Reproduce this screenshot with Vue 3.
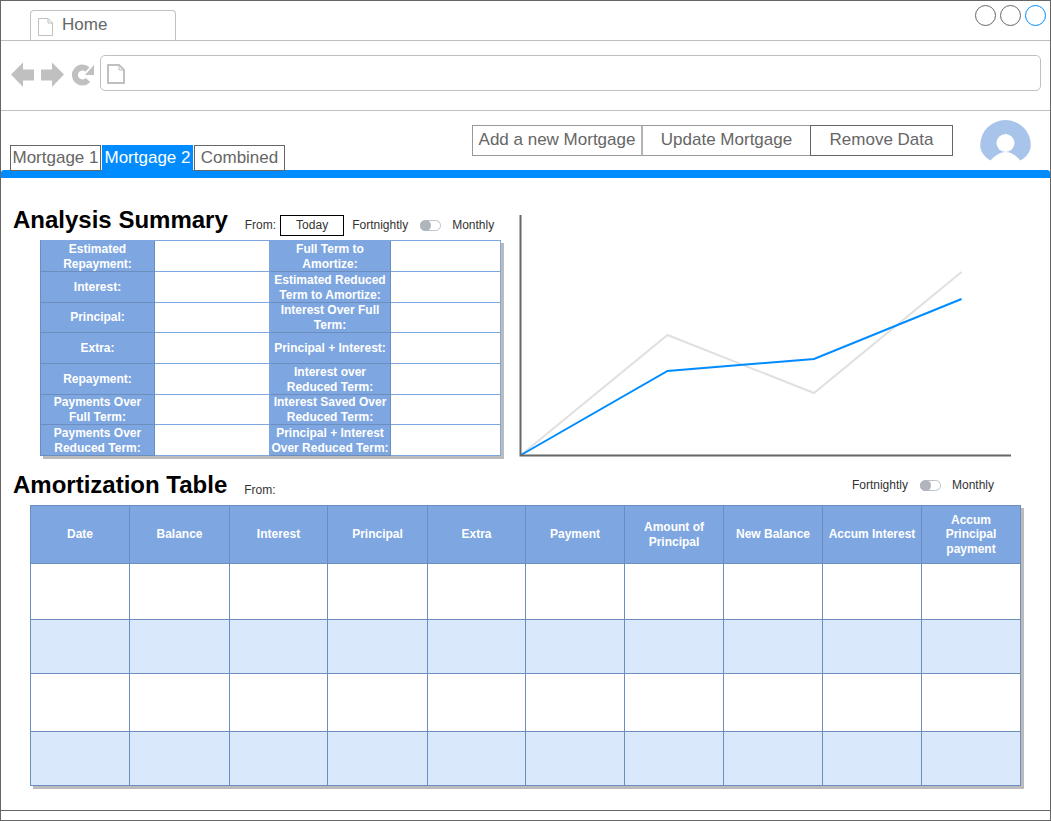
<script setup>
const summary = [
  ['Estimated\nRepayment:', 'Full Term to\nAmortize:'],
  ['Interest:', 'Estimated Reduced\nTerm to Amortize:'],
  ['Principal:', 'Interest Over Full\nTerm:'],
  ['Extra:', 'Principal + Interest:'],
  ['Repayment:', 'Interest over\nReduced Term:'],
  ['Payments Over\nFull Term:', 'Interest Saved Over\nReduced Term:'],
  ['Payments Over\nReduced Term:', 'Principal + Interest\nOver Reduced Term:'],
]
const headers = ['Date', 'Balance', 'Interest', 'Principal', 'Extra', 'Payment', 'Amount of\nPrincipal', 'New Balance', 'Accum Interest', 'Accum\nPrincipal\npayment']
const rows = [false, true, false, true]
</script>

<template>
  <div class="window">
    <header class="tabbar">
      <div class="browser-tab">
        <svg class="doc" width="17" height="20" viewBox="0 0 17 20">
          <path d="M1.5 1.5H11L15.5 6V18.5H1.5Z M11 1.5V6H15.5" fill="#fff" stroke="#c0c0c0" stroke-width="1" />
        </svg>
        <span>Home</span>
      </div>
      <div class="circles">
        <span class="circle"></span>
        <span class="circle"></span>
        <span class="circle active"></span>
      </div>
    </header>

    <nav class="navbar">
      <svg class="nav-icons" width="86" height="28" viewBox="0 0 86 28">
        <path d="M0 12.5L12 0.5V7.5H23V18.5H12V25Z" fill="#c0c0c0" />
        <path d="M53 12.5L41 0.5V7.5H30V18.5H41V25Z" fill="#c0c0c0" />
        <path d="M77 18A7.5 7.5 0 1 1 76.5 7.5" fill="none" stroke="#c0c0c0" stroke-width="6" />
        <path d="M83 3V13H74Z" fill="#c0c0c0" />
      </svg>
      <div class="address">
        <svg width="20" height="22" viewBox="0 0 20 22">
          <path d="M2 2H13L18 7V20H2Z" fill="#fff" stroke="#c0c0c0" stroke-width="2" />
          <path d="M13 2V7H18" fill="none" stroke="#c0c0c0" stroke-width="1" />
        </svg>
      </div>
    </nav>

    <div class="toolbar">
      <div class="tabs">
        <div class="tab">Mortgage 1</div>
        <div class="tab selected">Mortgage 2</div>
        <div class="tab">Combined</div>
      </div>
      <div class="actions">
        <div class="action first">Add a new Mortgage</div>
        <div class="action second">Update Mortgage</div>
        <div class="action third">Remove Data</div>
      </div>
      <svg class="avatar" width="51" height="50" viewBox="0 0 51 50">
        <path d="M10.5 40.5C3 36 0.2 30 0.2 25A25.3 25 0 0 1 50.8 25C50.8 30 48 36 40.5 40.5Q25.5 23.5 10.5 40.5Z" fill="#a9c4eb" />
        <circle cx="25.5" cy="23" r="9" fill="#fff" />
      </svg>
    </div>

    <div class="bar"></div>

    <section class="analysis">
      <div class="analysis-left">
        <div class="head">
          <h2 class="title">Analysis Summary</h2>
          <span class="from txt">From:</span>
          <span class="today">Today</span>
          <span class="fort txt">Fortnightly</span>
          <span class="toggle"><i></i></span>
          <span class="txt">Monthly</span>
        </div>
        <div class="summary">
          <template v-for="(row, i) in summary" :key="i">
            <div class="label" :class="{ up: i === 2 }">{{ row[0] }}</div>
            <div class="value"></div>
            <div class="label">{{ row[1] }}</div>
            <div class="value"></div>
          </template>
        </div>
      </div>
      <svg class="chart" width="493" height="242" viewBox="519 215 493 242">
        <path d="M521 455L667.5 335L814 393L961.5 272" fill="none" stroke="#e0e0e0" stroke-width="2" />
        <path d="M521 455L667.5 371L814 359L961.5 299" fill="none" stroke="#008cff" stroke-width="2" />
        <path d="M520.5 215V455.5H1011" fill="none" stroke="#666" stroke-width="2" />
      </svg>
    </section>

    <section class="amort">
      <div class="amort-head">
        <h2 class="title">Amortization Table</h2>
        <span class="from low">From:</span>
        <div class="period">
          <span class="fort">Fortnightly</span>
          <span class="toggle"><i></i></span>
          <span>Monthly</span>
        </div>
      </div>
      <div class="table">
        <div v-for="h in headers" :key="h" class="th">{{ h }}</div>
        <template v-for="(alt, r) in rows" :key="r">
          <div v-for="c in 10" :key="c" class="td" :class="{ alt }"></div>
        </template>
      </div>
    </section>

    <footer class="footer"></footer>
  </div>
</template>

<style scoped>
.window {
  width: 1051px;
  height: 821px;
  box-sizing: border-box;
  border: 1px solid #666;
  background: #fff;
  display: flex;
  flex-direction: column;
  font-family: "Liberation Sans", Arial, sans-serif;
  font-size: 12px;
  color: #333;
  overflow: hidden;
}
.tabbar {
  height: 39px;
  flex: none;
  box-sizing: content-box;
  border-bottom: 1px solid #c0c0c0;
  display: flex;
  justify-content: space-between;
  align-items: flex-start;
}
.browser-tab {
  width: 146px;
  height: 30px;
  margin: 9px 0 -1px 29px;
  box-sizing: border-box;
  border: 1px solid #c0c0c0;
  border-bottom: 0;
  border-radius: 4px 4px 0 0;
  background: #fff;
  display: flex;
  align-items: flex-start;
  font-size: 17px;
  color: #666;
}
.browser-tab .doc {
  margin: 6px 0 0 6px;
}
.browser-tab span {
  margin: 4px 0 0 8px;
  line-height: 20px;
}
.circles {
  display: flex;
  gap: 4px;
  margin: 4px 4px 0 0;
}
.circle {
  width: 21px;
  height: 21px;
  box-sizing: border-box;
  border: 1px solid #666;
  border-radius: 50%;
}
.circle.active {
  border-color: #008cff;
}
.navbar {
  height: 69px;
  flex: none;
  border-bottom: 1px solid #c0c0c0;
  display: flex;
  align-items: flex-start;
}
.nav-icons {
  margin: 21px 0 0 10px;
  flex: none;
}
.address {
  width: 941px;
  height: 36px;
  margin: 14px 0 0 3px;
  box-sizing: border-box;
  border: 1px solid #c0c0c0;
  border-radius: 5px;
  padding: 7px 0 0 5px;
}
.toolbar {
  height: 59px;
  flex: none;
  display: flex;
  align-items: flex-start;
}
.tabs {
  display: flex;
  gap: 1px;
  margin: 34px 0 0 9px;
  position: relative;
  z-index: 1;
}
.tab {
  width: 91px;
  height: 26px;
  box-sizing: border-box;
  border: 1px solid #666;
  background: #fff;
  color: #666;
  font-size: 17px;
  line-height: 23px;
  text-align: center;
  white-space: nowrap;
}
.tab.selected {
  height: 25px;
  background: #008cff;
  border-color: #008cff;
  color: #fff;
}
.actions {
  display: flex;
  margin: 14px 0 0 187px;
}
.action {
  height: 31px;
  box-sizing: border-box;
  border: 1px solid #999;
  font-size: 17px;
  line-height: 27px;
  color: #666;
  text-align: center;
  white-space: nowrap;
}
.action.first,
.action.second {
  width: 169px;
  border-right: 0;
}
.action.second {
  border-left: 2px solid #b4b4b4;
}
.action.third {
  width: 143px;
  border-color: #666;
}
.avatar {
  margin: 9px 0 0 27px;
  flex: none;
}
.bar {
  height: 8px;
  flex: none;
  background: #008cff;
  border-radius: 3px 3px 0 0;
}
.analysis {
  display: flex;
  align-items: flex-start;
  padding-top: 37px;
  flex: none;
}
.analysis-left {
  width: 518px;
  flex: none;
}
.head {
  height: 21px;
  display: flex;
  align-items: center;
  padding-left: 12px;
  margin-bottom: 4px;
  white-space: nowrap;
}
.txt {
  margin-bottom: 2px;
}
.title {
  margin: -12px 0 0 0;
  font-size: 24px;
  line-height: 24px;
  font-weight: 700;
  color: #000;
  white-space: nowrap;
}
.from {
  margin-left: 17px;
}
.today {
  width: 64px;
  height: 21px;
  box-sizing: border-box;
  border: 1px solid #000;
  margin-left: 4px;
  text-align: center;
  line-height: 18px;
}
.fort {
  margin-left: 8px;
}
.toggle {
  width: 21px;
  height: 11px;
  box-sizing: border-box;
  border: 1px solid #b9c3cd;
  border-radius: 6px;
  margin: 0 11px 0 12px;
  display: block;
  background: #fff;
}
.toggle i {
  display: block;
  width: 11px;
  height: 11px;
  margin: -1px 0 0 -1px;
  border-radius: 50%;
  background: #b0b5bb;
}
.summary {
  margin-left: 39px;
  width: 461px;
  box-sizing: border-box;
  border-top: 1px solid #7ea6e0;
  border-left: 1px solid #6c8ebf;
  display: grid;
  grid-template-columns: 114px 115px 121px 110px;
  grid-template-rows: 31px 31px 30px 31px 31px 30px 31px;
  box-shadow: 3px 3px 0 #bbb;
  background: #fff;
}
.label {
  background: #7ea6e0;
  color: #fff;
  font-weight: 700;
  line-height: 15px;
  text-align: center;
  white-space: pre-line;
  display: flex;
  align-items: center;
  justify-content: center;
  padding-top: 1px;
  border-bottom: 1px solid #6c8ebf;
  border-right: 1px solid #6c8ebf;
  box-sizing: border-box;
}
.label.up {
  padding-top: 0;
}
.value {
  background: #fff;
  border-bottom: 1px solid #7ea6e0;
  border-right: 1px solid #7ea6e0;
  box-sizing: border-box;
}
.chart {
  flex: none;
  display: block;
}
.amort {
  flex: none;
}
.amort-head {
  height: 24px;
  margin: 16px 0 8px;
  padding-left: 12px;
  display: flex;
  align-items: flex-start;
  white-space: nowrap;
}
.amort-head .title {
  margin: 0;
}
.from.low {
  margin-top: 10px;
  line-height: 14px;
}
.period {
  margin: 5px 0 0 auto;
  padding-right: 56px;
  display: flex;
  align-items: center;
  line-height: 14px;
}
.table {
  margin-left: 29px;
  width: 991px;
  box-sizing: border-box;
  border-top: 1px solid #6c8ebf;
  border-left: 1px solid #6c8ebf;
  display: grid;
  grid-template-columns: 99px 100px 98px 100px 98px 99px 99px 99px 99px 99px;
  grid-template-rows: 58px 56px 54px 58px 54px;
  box-shadow: 3px 3px 0 #bbb;
}
.th,
.td {
  box-sizing: border-box;
  border-right: 1px solid #6c8ebf;
  border-bottom: 1px solid #6c8ebf;
}
.th {
  background: #7ea6e0;
  color: #fff;
  font-weight: 700;
  line-height: 14.5px;
  text-align: center;
  white-space: pre-line;
  display: flex;
  align-items: center;
  justify-content: center;
}
.td {
  background: #fff;
}
.td.alt {
  background: #dae8fc;
}
.footer {
  margin-top: auto;
  height: 10px;
  box-sizing: border-box;
  border-top: 1px solid #666;
  flex: none;
}
</style>
